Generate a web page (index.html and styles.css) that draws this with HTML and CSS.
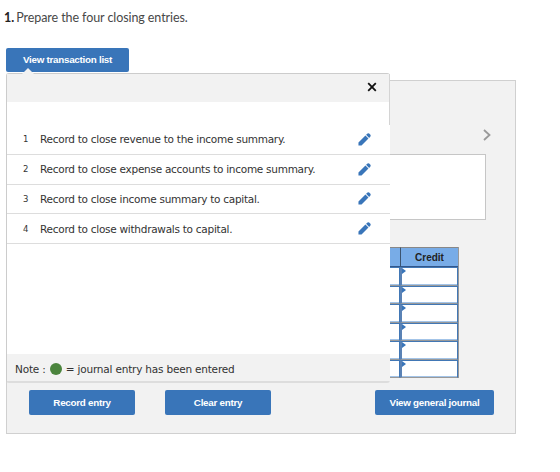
FILE: index.html
```html
<!DOCTYPE html>
<html lang="en">
<head>
<meta charset="utf-8">
<title>Closing entries</title>
<link rel="stylesheet" href="styles.css">
</head>
<body>
<svg width="0" height="0" class="defs">
  <symbol id="pencil" viewBox="0 0 14 14"><path d="M.5 13.5V10.2L8 2.7 11.3 6 3.8 13.5ZM8.7 2 10.3.6Q11.2 0 12 .6L13.4 2Q14 2.8 13.4 3.7L12 5.3Z"/></symbol>
</svg>
<p class="question"><b>1.</b> Prepare the four closing entries.</p>
<button class="btn btn-list"><span>View transaction list</span></button>
<section class="worksheet">
  <div class="nav"><svg class="next" viewBox="0 0 8 12"><path d="M1 1 6.5 6 1 11"/></svg></div>
  <div class="description"></div>
  <table class="journal">
    <thead><tr><th></th><th>Credit</th></tr></thead>
    <tbody>
      <tr><td></td><td></td></tr>
      <tr><td></td><td></td></tr>
      <tr><td></td><td></td></tr>
      <tr><td></td><td></td></tr>
      <tr><td></td><td></td></tr>
      <tr><td></td><td></td></tr>
    </tbody>
  </table>
  <div class="actions">
    <button class="btn">Record entry</button>
    <button class="btn">Clear entry</button>
    <button class="btn btn-journal">View general journal</button>
  </div>
  <aside class="popup">
    <header><svg class="close" viewBox="0 0 10 10"><path d="M1.2 1.2 8.8 8.8M8.8 1.2 1.2 8.8"/></svg></header>
    <ol>
      <li><small>1</small><span>Record to close revenue to the income summary.</span><svg><use href="#pencil"/></svg></li>
      <li><small>2</small><span>Record to close expense accounts to income summary.</span><svg><use href="#pencil"/></svg></li>
      <li><small>3</small><span>Record to close income summary to capital.</span><svg><use href="#pencil"/></svg></li>
      <li><small>4</small><span>Record to close withdrawals to capital.</span><svg><use href="#pencil"/></svg></li>
    </ol>
    <footer>Note : <i></i> = journal entry has been entered</footer>
  </aside>
</section>
</body>
</html>
```
FILE: styles.css
```css
* { box-sizing: border-box; }
body { margin: 0; background: #fff; color: #333; font-family: "DejaVu Sans", Verdana, sans-serif; }
.defs { position: absolute; }
.question { margin: 10px 0 22px 4px; height: 16px; color: #484848; font: 12.5px/16px Lato, sans-serif; letter-spacing: -.08px; white-space: nowrap; }
.question b { margin-right: -1px; color: #222; }
.btn { display: flex; align-items: center; justify-content: center; width: 106px; height: 25px; padding: 0 0 1px; border: 0; border-radius: 2px; background: #3975b9; color: #fff; font: bold 9.8px "Liberation Sans", Arial, sans-serif; letter-spacing: -.26px; white-space: nowrap; }
.btn-list { width: 123px; height: 24px; margin-left: 6px; }
.worksheet { position: relative; width: 510px; height: 354px; margin: 8px 0 0 6px; border: 1px solid #d0d0d0; background: #f2f2f2; }
.nav { display: flex; justify-content: flex-end; height: 73px; padding: 48px 24px 0 0; }
.next { width: 8px; height: 12px; fill: none; stroke: #999; stroke-width: 1.8; }
.description { width: 456px; height: 66px; margin-left: 23px; border: 1px solid #c6c6c6; background: #fff; }
.journal { width: 82px; margin: 27px 0 0 370px; border-spacing: 0; table-layout: fixed; border-right: 1px solid #999; font: bold 10px "Liberation Sans", Arial, sans-serif; color: #222; }
.journal th { height: 20px; padding: 0; background: #78ace7; border-top: 1px solid #888; border-bottom: 1px solid #33578a; border-left: 1px solid #3b5470; }
.journal th:first-child, .journal td:first-child { width: 23px; }
.journal td { position: relative; height: 18.5px; padding: 0; background: #fff; border: 1px solid #4177b5; border-left: 2px solid #5a82b5; border-bottom-color: #999; box-shadow: inset 0 -1px #a3c4e8; }
.journal td + td::before { content: ""; position: absolute; left: 0; top: 0; border: 3px solid transparent; border-left: 4px solid #3975b9; border-right: 0; }
.actions { display: flex; height: 25px; margin: 12px 21px 0 22px; gap: 30px; }
.btn-journal { width: 119px; margin-left: auto; }
.popup { position: absolute; left: -1px; top: -8px; display: flex; flex-direction: column; width: 384px; height: 310px; border: 1px solid #ccc; border-right: 0; border-bottom: 2px solid #ddd; border-radius: 3px; background: #fff; }
.popup::before { content: ""; position: absolute; left: 15px; top: -6px; border: 6px solid transparent; border-top: 0; border-bottom-color: #f2f2f2; }
.popup::after { content: ""; position: absolute; right: 0; top: 0; width: 1px; height: 51px; background: #d4d4d4; }
.popup header { display: flex; justify-content: flex-end; height: 28px; padding: 8px 13px 0 0; background: #f2f2f2; }
.close { width: 10px; height: 10px; fill: none; stroke: #111; stroke-width: 1.8; }
.popup ol { flex: 1; margin: 0; padding: 23px 0 0; list-style: none; }
.popup li { display: flex; align-items: center; height: 29.75px; padding: 0 19px 0 16px; border-bottom: 1px solid #ddd; font-size: 10.5px; letter-spacing: -.27px; }
.popup li small { width: 17px; font-size: 8.5px; }
.popup li svg { width: 13px; height: 13px; margin-left: auto; fill: #3975b9; }
.popup footer { display: flex; align-items: center; height: 27px; padding: 2px 0 0 8px; background: #f2f2f2; font-size: 10.5px; letter-spacing: -.2px; white-space: pre; }
.popup footer i { width: 12px; height: 12px; margin: 0 1px; border-radius: 50%; background: #4b843d; }
```
